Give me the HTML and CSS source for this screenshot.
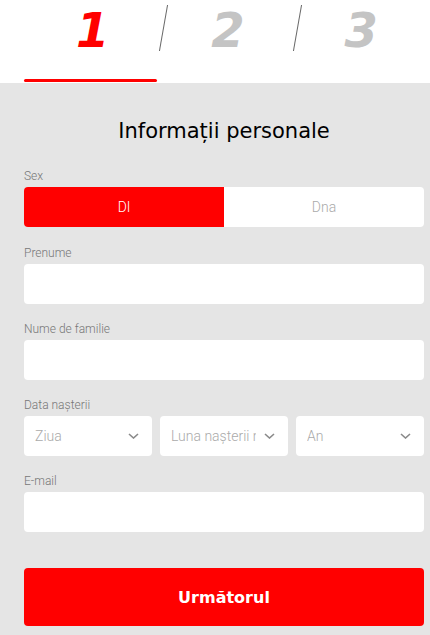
FILE: index.html
```html
<!DOCTYPE html>
<html lang="ro">
<head>
  <meta charset="UTF-8">
  <title>Informații personale</title>
  <link rel="stylesheet" href="styles.css">
</head>
<body>
  <div class="steps">
    <div class="step active">
      <span class="num">1</span>
      <span class="bar"></span>
    </div>
    <div class="step">
      <span class="num">2</span>
      <span class="bar"></span>
    </div>
    <div class="step">
      <span class="num">3</span>
      <span class="bar"></span>
    </div>
  </div>

  <div class="form">
    <h1>Informații personale</h1>

    <div class="group group-sex">
      <label>Sex</label>
      <div class="toggle">
        <div class="opt on">Dl</div>
        <div class="opt">Dna</div>
      </div>
    </div>

    <div class="group">
      <label>Prenume</label>
      <input type="text">
    </div>

    <div class="group">
      <label>Nume de familie</label>
      <input type="text">
    </div>

    <div class="group">
      <label>Data nașterii</label>
      <div class="dates">
        <div class="select">
          <span class="val">Ziua</span>
          <svg class="chev" width="11" height="6" viewBox="0 0 11 6"><polyline points="1,1 5.5,5 10,1" fill="none" stroke="#8a8a8a" stroke-width="1.6"/></svg>
        </div>
        <div class="select">
          <span class="val">Luna nașterii născut</span>
          <svg class="chev" width="11" height="6" viewBox="0 0 11 6"><polyline points="1,1 5.5,5 10,1" fill="none" stroke="#8a8a8a" stroke-width="1.6"/></svg>
        </div>
        <div class="select">
          <span class="val">An</span>
          <svg class="chev" width="11" height="6" viewBox="0 0 11 6"><polyline points="1,1 5.5,5 10,1" fill="none" stroke="#8a8a8a" stroke-width="1.6"/></svg>
        </div>
      </div>
    </div>

    <div class="group">
      <label>E-mail</label>
      <input type="email">
    </div>

    <button class="next">Următorul</button>
  </div>
</body>
</html>
```

FILE: styles.css
```css
body {
  margin: 0;
  background: #e5e5e5;
  font-family: Roboto, "Liberation Sans", sans-serif;
}

.steps {
  background: white;
  display: flex;
  padding: 2px 6px 1px 24px;
}

.step {
  flex: 1;
  display: flex;
  flex-direction: column;
  align-items: center;
  position: relative;
}

.step + .step::before {
  content: '';
  position: absolute;
  left: 6px;
  top: 3px;
  height: 46px;
  border-left: 1px solid #666;
  transform: skewX(-10deg);
}

.num {
  font-family: "DejaVu Sans", sans-serif;
  font-weight: bold;
  font-style: italic;
  font-size: 48px;
  line-height: 56px;
  color: #c4c4c4;
  padding-left: 8px;
}

.step.active .num {
  padding-left: 4px;
}

.bar {
  align-self: stretch;
  height: 3px;
  margin-top: 21px;
  border-radius: 2px;
}

.step.active .num {
  color: #ff0000;
}

.step.active .bar {
  background: #ff0000;
}

.form {
  padding: 35px 6px 20px 24px;
}

h1 {
  margin: 0 0 24px;
  font-family: "DejaVu Sans", sans-serif;
  font-weight: normal;
  font-size: 21px;
  line-height: 26px;
  text-align: center;
  color: #000;
}

.group {
  margin-bottom: 17px;
}

.group-sex {
  margin-bottom: 18px;
}

label {
  display: block;
  font-size: 12px;
  font-weight: 300;
  line-height: 16px;
  color: #777;
  margin-bottom: 3px;
}

input {
  display: block;
  box-sizing: border-box;
  width: 100%;
  height: 40px;
  border: none;
  border-radius: 4px;
  background: white;
  margin: 0;
}

.toggle {
  display: flex;
  height: 40px;
  border-radius: 4px;
  overflow: hidden;
  background: white;
}

.opt {
  flex: 1;
  display: flex;
  align-items: center;
  justify-content: center;
  font-size: 14px;
  font-weight: 300;
  color: #aaa;
}

.opt.on {
  background: #ff0000;
  color: white;
}

.dates {
  display: flex;
  gap: 8px;
}

.select {
  flex: 1;
  min-width: 0;
  height: 40px;
  background: white;
  border-radius: 4px;
  display: flex;
  align-items: center;
  padding: 0 13px 0 11px;
  gap: 8px;
}

.val {
  flex: 1;
  min-width: 0;
  overflow: hidden;
  white-space: nowrap;
  font-size: 14px;
  font-weight: 300;
  color: #aaa;
}

.chev {
  flex: none;
}

.next {
  display: block;
  width: 100%;
  height: 58px;
  margin-top: 36px;
  border: none;
  border-radius: 4px;
  background: #ff0000;
  color: white;
  font-family: "DejaVu Sans", sans-serif;
  font-weight: bold;
  font-size: 16px;
  cursor: pointer;
}
```
